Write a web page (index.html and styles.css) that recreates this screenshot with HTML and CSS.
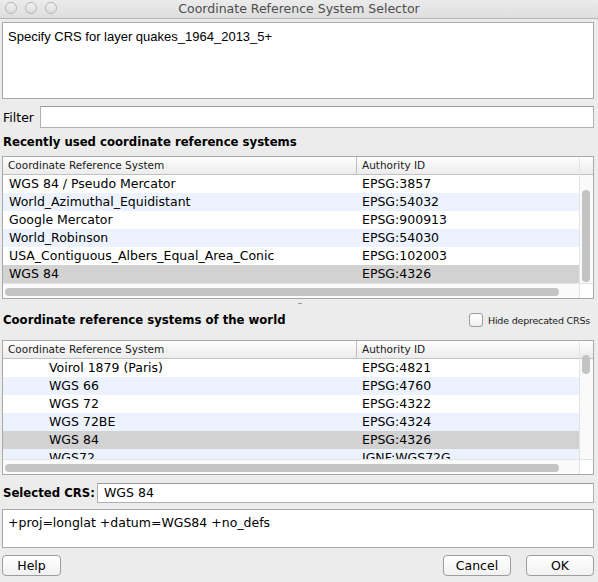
FILE: index.html
```html
<!DOCTYPE html>
<html>
<head>
<meta charset="utf-8">
<link rel="stylesheet" href="styles.css">
</head>
<body>
<div class="window">
  <div class="titlebar">
    <div class="lights"><span class="light"></span><span class="light"></span><span class="light"></span></div>
    <div class="title">Coordinate Reference System Selector</div>
  </div>
  <div class="content">
    <div class="infobox">Specify CRS for layer quakes_1964_2013_5+</div>
    <div class="filter-row">
      <span class="label">Filter</span>
      <div class="input filter-input"></div>
    </div>
    <div class="heading">Recently used coordinate reference systems</div>
    <div class="table table-recent">
      <div class="table-main">
        <div class="thead">
          <div class="col1">Coordinate Reference System</div>
          <div class="col2">Authority ID</div>
        </div>
        <div class="tbody">
          <div class="row"><div class="col1">WGS 84 / Pseudo Mercator</div><div class="col2">EPSG:3857</div></div>
          <div class="row alt"><div class="col1">World_Azimuthal_Equidistant</div><div class="col2">EPSG:54032</div></div>
          <div class="row"><div class="col1">Google Mercator</div><div class="col2">EPSG:900913</div></div>
          <div class="row alt"><div class="col1">World_Robinson</div><div class="col2">EPSG:54030</div></div>
          <div class="row"><div class="col1">USA_Contiguous_Albers_Equal_Area_Conic</div><div class="col2">EPSG:102003</div></div>
          <div class="row sel"><div class="col1">WGS 84</div><div class="col2">EPSG:4326</div></div>
        </div>
        <div class="hscroll"><div class="hthumb"></div></div>
      </div>
      <div class="vscroll">
        <div class="vhead"></div>
        <div class="vtrack"><div class="vthumb thumb-recent"></div></div>
        <div class="corner"></div>
      </div>
    </div>
    <div class="splitter"><span class="grip"></span></div>
    <div class="heading-row">
      <div class="heading">Coordinate reference systems of the world</div>
      <label class="check"><span class="box"></span>Hide deprecated CRSs</label>
    </div>
    <div class="table table-world">
      <div class="table-main">
        <div class="thead">
          <div class="col1">Coordinate Reference System</div>
          <div class="col2">Authority ID</div>
        </div>
        <div class="tbody">
          <div class="row"><div class="col1 indent">Voirol 1879 (Paris)</div><div class="col2">EPSG:4821</div></div>
          <div class="row alt"><div class="col1 indent">WGS 66</div><div class="col2">EPSG:4760</div></div>
          <div class="row"><div class="col1 indent">WGS 72</div><div class="col2">EPSG:4322</div></div>
          <div class="row alt"><div class="col1 indent">WGS 72BE</div><div class="col2">EPSG:4324</div></div>
          <div class="row sel"><div class="col1 indent">WGS 84</div><div class="col2">EPSG:4326</div></div>
          <div class="row alt partial"><div class="col1 indent">WGS72</div><div class="col2">IGNF:WGS72G</div></div>
        </div>
        <div class="hscroll"><div class="hthumb"></div></div>
      </div>
      <div class="vscroll">
        <div class="vhead"></div>
        <div class="vtrack"><div class="vthumb thumb-world"></div></div>
        <div class="corner"></div>
      </div>
    </div>
    <div class="selected-row">
      <span class="label bold">Selected CRS:</span>
      <div class="input sel-input">WGS 84</div>
    </div>
    <div class="projbox">+proj=longlat +datum=WGS84 +no_defs</div>
    <div class="buttons">
      <button class="btn btn-help">Help</button>
      <div class="spacer"></div>
      <button class="btn btn-cancel">Cancel</button>
      <button class="btn btn-ok">OK</button>
    </div>
  </div>
</div>
</body>
</html>
```

FILE: styles.css
```css
* { box-sizing: border-box; }
html, body { margin: 0; padding: 0; }
body {
  width: 598px;
  height: 582px;
  background: #ececec;
  font-family: "DejaVu Sans", sans-serif;
  color: #000;
  overflow: hidden;
}
.window { width: 598px; height: 582px; display: flex; flex-direction: column; }
.titlebar {
  height: 19px;
  position: relative;
  background: linear-gradient(#ebebeb, #dedede);
  border-bottom: 1px solid #b4b4b4;
  display: flex;
  align-items: center;
  justify-content: center;
}
.lights { position: absolute; left: 5px; top: 2px; display: flex; gap: 8px; }
.light {
  width: 12px; height: 12px; border-radius: 50%;
  border: 1px solid #b5b5b5;
  background: linear-gradient(#f2f2f2, #dcdcdc);
}
.title {
  font-family: "DejaVu Sans", sans-serif;
  font-size: 12.5px;
  color: #4e4e4e;
  margin-top: -1px;
}
.content { padding: 3px 4px 0 2px; display: flex; flex-direction: column; }
.infobox {
  height: 77px;
  background: #fff;
  border: 1px solid #a9a9a9;
  font-family: "Liberation Sans", sans-serif;
  font-size: 13px;
  padding: 6px 0 0 5px;
}
.filter-row { display: flex; align-items: center; margin-top: 7px; height: 22px; }
.label { font-size: 12.5px; padding-left: 1px; width: 38px; flex-shrink: 0; white-space: nowrap; }
.bold { font-weight: bold; font-size: 11.7px; }
.input {
  background: #fff;
  border: 1px solid #b0b0b0;
  border-top-color: #9a9a9a;
  height: 22px;
}
.filter-input { flex: 1; }
.heading { font-weight: bold; font-size: 11.7px; padding-left: 1px; margin-top: 7px; height: 15px; line-height: 15px; white-space: nowrap; }
.table {
  margin-top: 6px;
  border: 1px solid #a9a9a9;
  background: #fff;
  display: flex;
}
.table-recent { height: 143px; }
.table-world { height: 135px; margin-top: 10px; }
.table-main { flex: 1; display: flex; flex-direction: column; min-width: 0; }
.thead {
  height: 18px;
  display: flex;
  background: linear-gradient(#fdfdfd, #ececec);
  border-bottom: 1px solid #c2c2c2;
  font-size: 10.5px;
  line-height: 17px;
  color: #1a1a1a;
}
.thead .col1 { padding-left: 5px; }
.thead .col2 { border-left: 1px solid #bdbdbd; padding-left: 5px; }
.col1 { width: 353px; white-space: nowrap; overflow: hidden; }
.col2 { flex: 1; white-space: nowrap; }
.tbody { flex: 1; overflow: hidden; }
.row { height: 18px; display: flex; font-size: 12.5px; line-height: 18px; }
.row .col1 { padding-left: 6px; }
.row .col1.indent { padding-left: 46px; }
.row .col2 { padding-left: 6px; }
.alt { background: #edf3fe; }
.sel { background: #d2d2d2; }
.partial { height: 12px; overflow: hidden; }
.hscroll {
  height: 15px;
  border-top: 1px solid #e4e4e4;
  background: #fafafa;
  padding: 4px 20px 3px 2px;
}
.hthumb { height: 8px; border-radius: 4px; background: #c3c3c3; }
.vscroll {
  width: 14px;
  border-left: 1px solid #e4e4e4;
  display: flex;
  flex-direction: column;
  background: #fafafa;
}
.vhead { height: 18px; background: linear-gradient(#fdfdfd, #ececec); border-bottom: 1px solid #c2c2c2; }
.vtrack { flex: 1; padding: 0 3px 0 2px; }
.vthumb { border-radius: 4px; background: #c3c3c3; }
.thumb-recent { margin-top: 15px; height: 92px; }
.thumb-world { margin-top: -4px; height: 19px; }
.corner { height: 15px; border-top: 1px solid #e4e4e4; background: #fff; }
.splitter { height: 11px; display: flex; justify-content: center; align-items: center; }
.grip { width: 4px; height: 3px; border-top: 1px solid #9a9a9a; margin-left: 4px; }
.heading-row { display: flex; align-items: center; justify-content: space-between; height: 20px; }
.heading-row .heading { margin-top: 0; }
.check { display: flex; align-items: center; font-size: 9.5px; letter-spacing: -0.2px; color: #1a1a1a; padding-right: 4px; white-space: nowrap; }
.box {
  width: 14px; height: 14px; border-radius: 3px;
  border: 1px solid #9b9b9b;
  background: linear-gradient(#ffffff, #f0f0f0);
  margin-right: 5px;
}
.selected-row { display: flex; align-items: center; margin-top: 8px; height: 20px; }
.selected-row .label { width: 95px; }
.sel-input { flex: 1; height: 20px; font-size: 12.5px; line-height: 18px; padding-left: 6px; }
.projbox {
  margin-top: 6px;
  height: 39px;
  background: #fff;
  border: 1px solid #a9a9a9;
  font-size: 12.5px;
  padding: 5px 0 0 5px;
}
.buttons { display: flex; margin-top: 7px; height: 21px; }
.spacer { flex: 1; }
.btn {
  font-family: "DejaVu Sans", sans-serif;
  font-size: 12.5px;
  height: 21px;
  padding: 0;
  border: 1px solid #9d9d9d;
  border-radius: 4px;
  background: linear-gradient(#ffffff, #f1f1f1);
  color: #000;
}
.btn-help { width: 59px; }
.btn-cancel { width: 68px; }
.btn-ok { width: 68px; margin-left: 15px; }
```
